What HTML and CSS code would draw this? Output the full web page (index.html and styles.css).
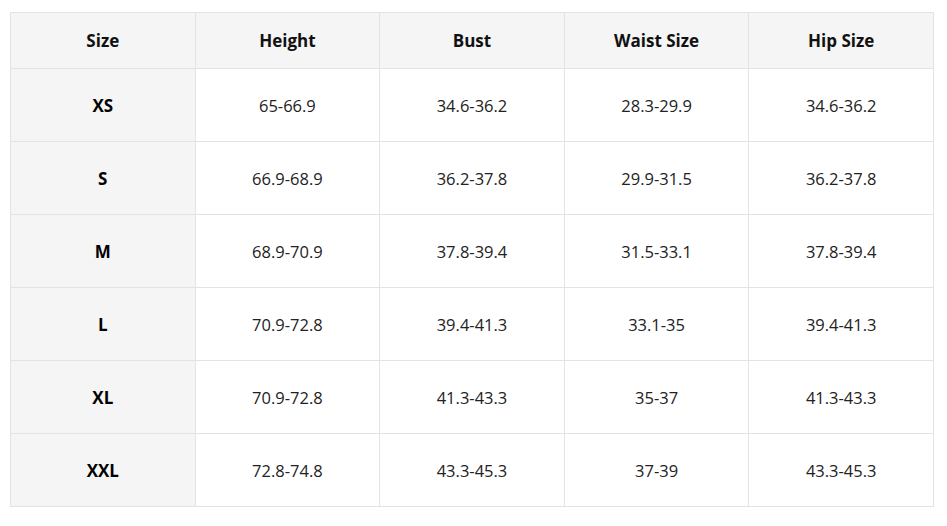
FILE: index.html
```html
<!DOCTYPE html>
<html>
<head>
<meta charset="utf-8">
<link rel="stylesheet" href="styles.css">
</head>
<body>
<table class="size-table">
  <thead>
    <tr><th>Size</th><th>Height</th><th>Bust</th><th>Waist Size</th><th>Hip Size</th></tr>
  </thead>
  <tbody>
    <tr><th>XS</th><td>65-66.9</td><td>34.6-36.2</td><td>28.3-29.9</td><td>34.6-36.2</td></tr>
    <tr><th>S</th><td>66.9-68.9</td><td>36.2-37.8</td><td>29.9-31.5</td><td>36.2-37.8</td></tr>
    <tr><th>M</th><td>68.9-70.9</td><td>37.8-39.4</td><td>31.5-33.1</td><td>37.8-39.4</td></tr>
    <tr><th>L</th><td>70.9-72.8</td><td>39.4-41.3</td><td>33.1-35</td><td>39.4-41.3</td></tr>
    <tr><th>XL</th><td>70.9-72.8</td><td>41.3-43.3</td><td>35-37</td><td>41.3-43.3</td></tr>
    <tr><th>XXL</th><td>72.8-74.8</td><td>43.3-45.3</td><td>37-39</td><td>43.3-45.3</td></tr>
  </tbody>
</table>
</body>
</html>
```
FILE: styles.css
```css
html, body { margin: 0; padding: 0; background: #ffffff; }
body { padding: 12px 0 0 10px; font-family: "Open Sans", "Noto Sans", sans-serif; color: #222; }
.size-table {
  border-collapse: collapse;
  width: 924px;
  table-layout: fixed;
  font-size: 16.5px;
}
.size-table th, .size-table td {
  border: 1px solid #e3e3e3;
  text-align: center;
  vertical-align: middle;
  padding: 0;
}
.size-table thead th {
  height: 55px;
  background: #f5f5f5;
  font-weight: 700;
  font-size: 17px;
  color: #111;
}
.size-table tbody th {
  background: #f5f5f5;
  font-weight: 700;
  font-size: 17px;
  color: #000;
}
.size-table tbody td, .size-table tbody th { height: 72px; }
.size-table td { color: #222; font-weight: 400; }
```
